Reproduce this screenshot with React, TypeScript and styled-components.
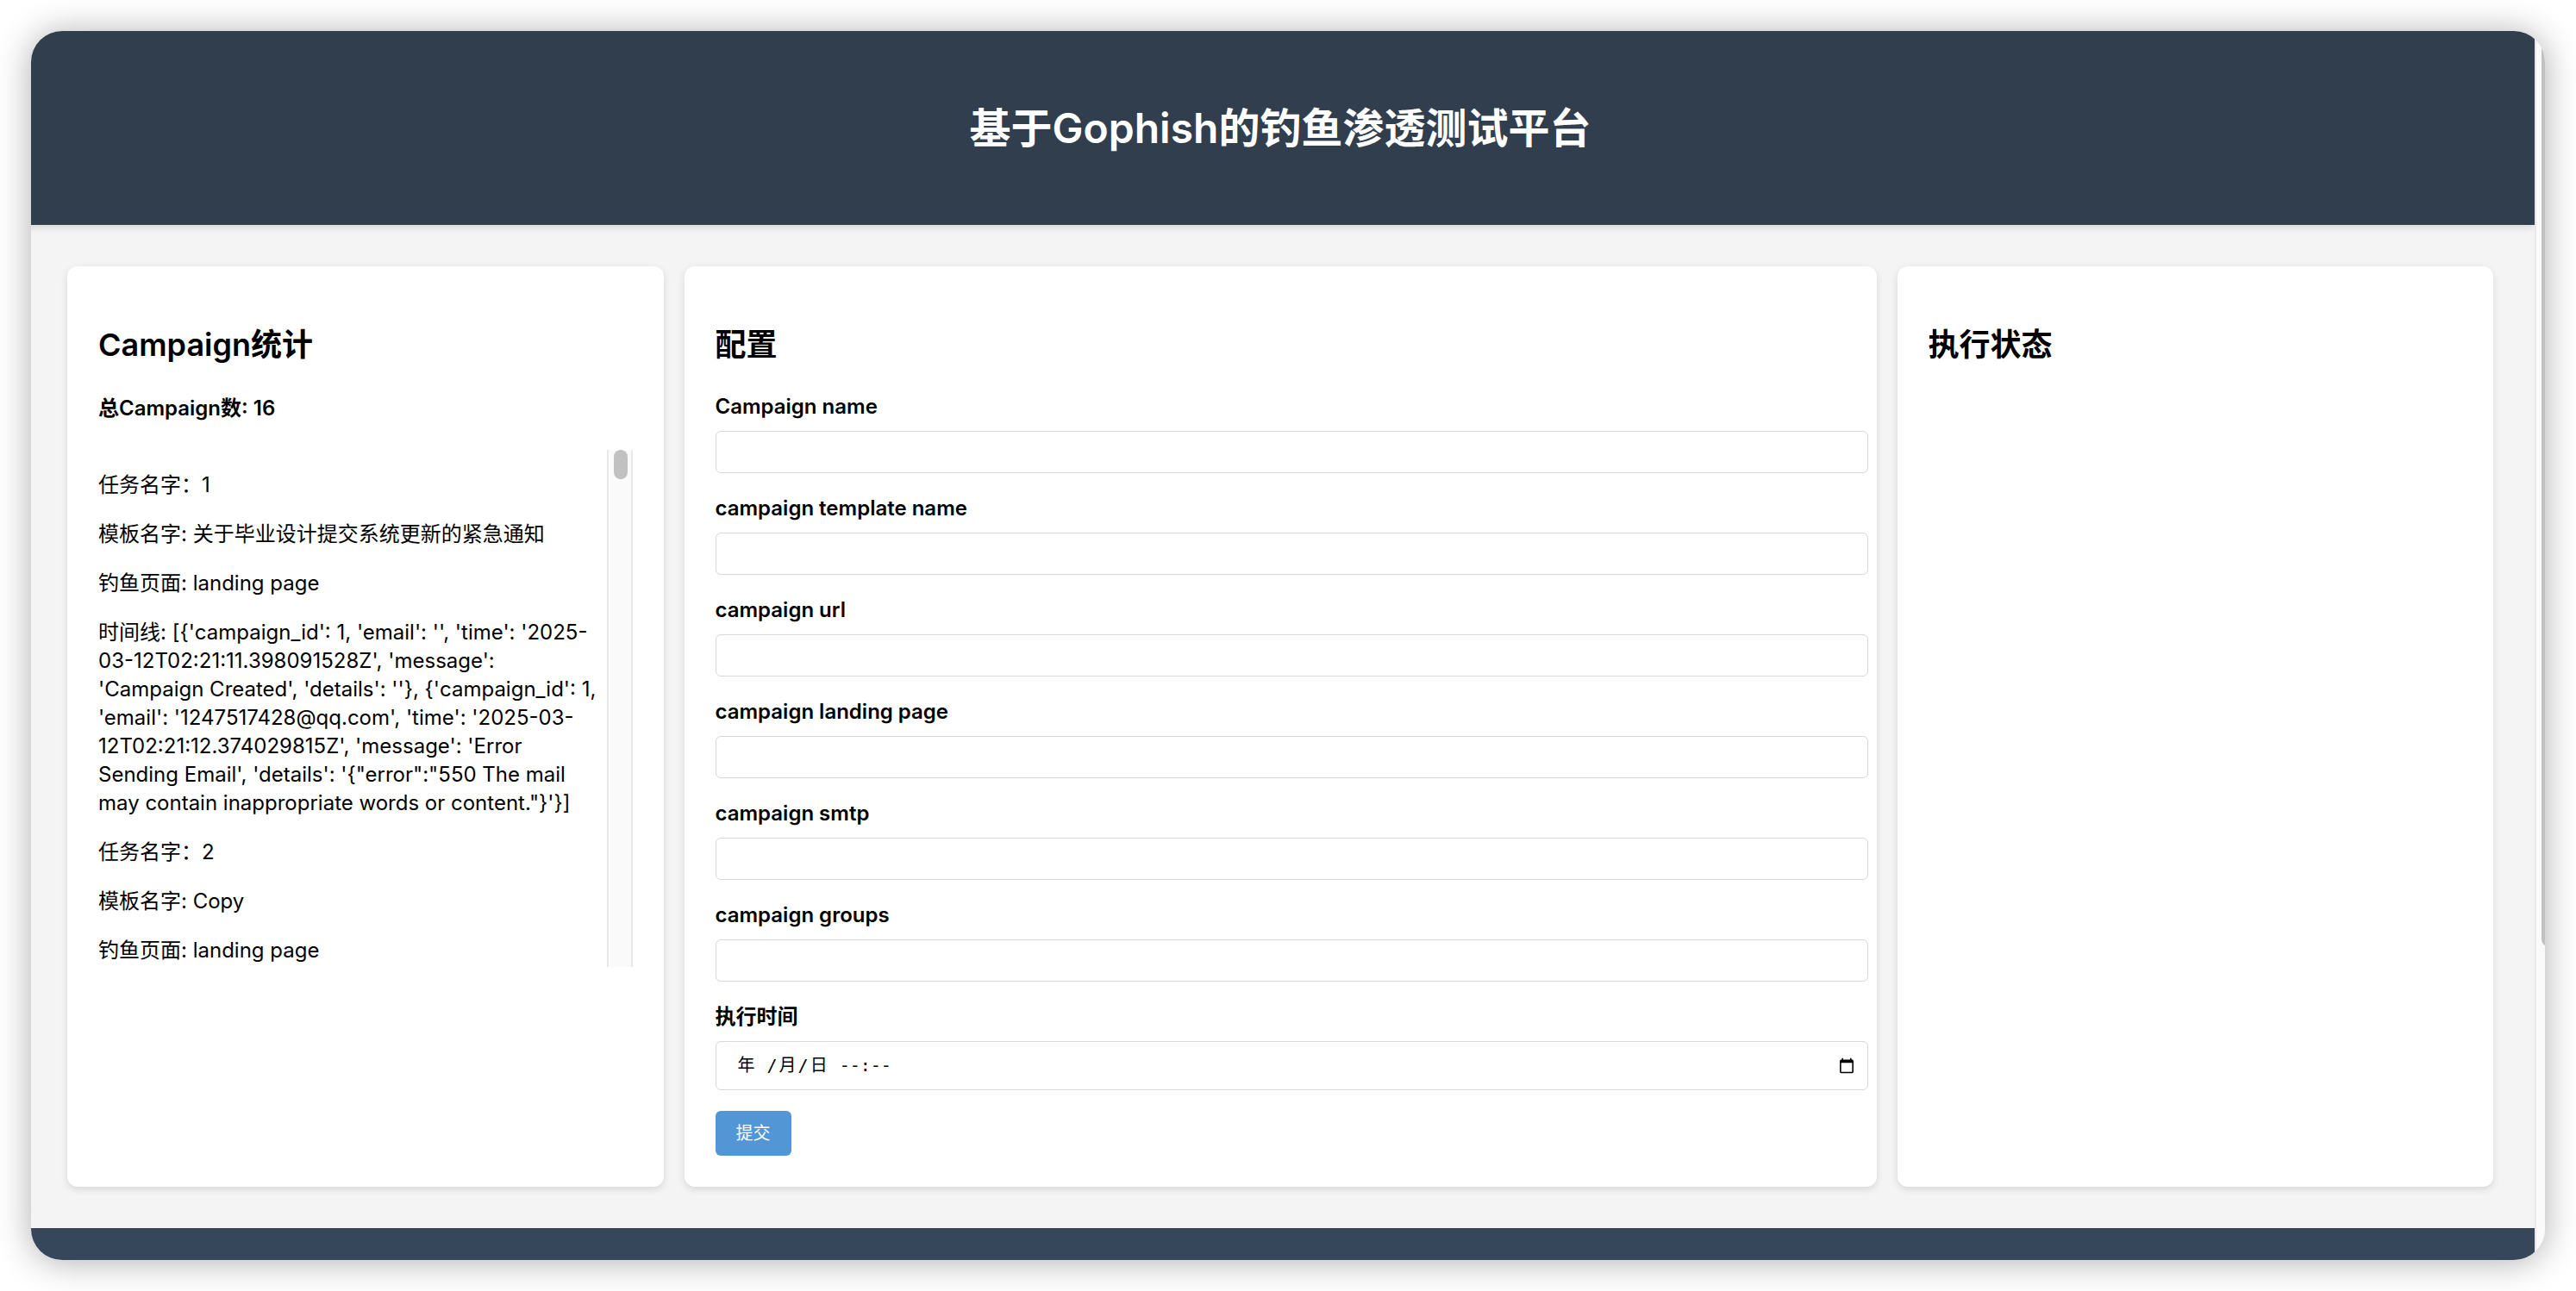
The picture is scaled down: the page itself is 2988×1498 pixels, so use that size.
import React, { useState } from "react";
import styled, { createGlobalStyle } from "styled-components";

const GlobalStyle = createGlobalStyle`
  *, *::before, *::after {
    box-sizing: border-box;
  }

  body {
    margin: 0;
    background: #fff;
    color: #000;
    font-family: Inter, "Noto Sans CJK SC", sans-serif;
    font-size: 24px;
    line-height: 33px;
  }
`;

const Desktop = styled.div`
  display: flex;
  min-height: 100vh;
  padding: 36px;
`;

const Window = styled.div`
  flex: 1;
  min-width: 0;
  display: flex;
  overflow: hidden;
  border-radius: 36px;
  background: #f4f4f4;
  box-shadow: 0 2px 40px rgba(0, 0, 0, 0.32);
`;

const Page = styled.div`
  flex: 1;
  min-width: 0;
  margin-left: -6px;
  display: flex;
  flex-direction: column;
`;

const PageRail = styled.div`
  flex: none;
  width: 12px;
  overflow: hidden;
  padding-left: 6px;
  border-left: 2px solid #e8e8e8;
  background: #fafafa;
`;

const PageThumb = styled.div`
  width: 16px;
  height: 74.5%;
  border-radius: 8px;
  background: #c1c1c1;
`;

const Header = styled.header`
  padding: 36px;
  background: #313e4e;
  color: #fff;
  text-align: center;
  box-shadow: 0 3px 8px rgba(0, 0, 0, 0.12);
`;

const Title = styled.h1`
  margin: 42px 0;
  font-size: 48px;
  font-weight: 600;
  line-height: 69px;
`;

const Columns = styled.main`
  display: grid;
  grid-template-columns: minmax(0, 1fr) minmax(0, 2fr) minmax(0, 1fr);
  gap: 24px;
  padding: 48px;
`;

const Card = styled.section`
  padding: 36px;
  border-radius: 12px;
  background: #fff;
  box-shadow: 0 3px 8px rgba(0, 0, 0, 0.12);
`;

const CardTitle = styled.h2`
  margin: 30px 0;
  font-size: 36px;
  font-weight: 600;
  line-height: 50px;
`;

const Total = styled.p`
  margin: 0 0 30px;
  font-weight: 600;
  line-height: 37px;
`;

const ScrollBox = styled.div`
  display: flex;
  height: 600px;
`;

const ScrollContent = styled.div`
  flex: 1;
  min-width: 0;
  padding-right: 10px;
  overflow: hidden;
`;

const ScrollRail = styled.div`
  flex: none;
  width: 30px;
  padding: 0 4px 0 6px;
  border: solid #e8e8e8;
  border-width: 0 2px;
  background: #fafafa;
`;

const ScrollThumb = styled.div`
  width: 16px;
  height: 34px;
  border-radius: 8px;
  background: #c1c1c1;
`;

const Entry = styled.p`
  margin: 24px 0;
  overflow-wrap: break-word;
`;

const Form = styled.form`
  display: flex;
  flex-direction: column;
  align-items: flex-start;
  gap: 24px;
`;

const Field = styled.div`
  width: 100%;
`;

const Label = styled.label`
  display: block;
  margin-bottom: 12px;
  font-weight: 600;
`;

const TextBox = styled.input`
  display: block;
  box-sizing: content-box;
  width: 100%;
  height: 23px;
  padding: 12px;
  border: 1px solid #d8d8d8;
  border-radius: 6px;
  background: #fff;
  font: inherit;
  font-size: 20px;
`;

const DateWrap = styled.div`
  position: relative;
`;

const DateBox = styled(TextBox)<{ $empty: boolean }>`
  height: 31px;
  font-family: "DejaVu Sans Mono", "Noto Sans CJK SC", monospace;

  &::-webkit-datetime-edit {
    opacity: ${({ $empty }) => ($empty ? 0 : 1)};
  }
`;

const DateHint = styled.div`
  position: absolute;
  inset: 0 auto 0 26px;
  display: flex;
  align-items: center;
  gap: 2px;
  pointer-events: none;
  white-space: pre;
  font-family: "DejaVu Sans Mono", "Noto Sans CJK SC", monospace;
  font-size: 20px;
`;

const Submit = styled.button`
  height: 52px;
  padding: 0 24px;
  border: 0;
  border-radius: 6px;
  background: #5296d5;
  color: #fff;
  font: inherit;
  font-size: 20px;
  cursor: pointer;
`;

const Footer = styled.footer`
  flex: 1;
  min-height: 37px;
  background: #37475b;
`;

const campaigns = [
  {
    name: "1",
    template: "关于毕业设计提交系统更新的紧急通知",
    page: "landing page",
    timeline:
      "[{'campaign_id': 1, 'email': '', 'time': '2025-03-12T02:21:11.398091528Z', 'message': 'Campaign Created', 'details': ''}, {'campaign_id': 1, 'email': '1247517428@qq.com', 'time': '2025-03-12T02:21:12.374029815Z', 'message': 'Error Sending Email', 'details': '{\"error\":\"550 The mail may contain inappropriate words or content.\"}'}]",
  },
  { name: "2", template: "Copy", page: "landing page" },
];

const fields = [
  { id: "name", label: "Campaign name" },
  { id: "template", label: "campaign template name" },
  { id: "url", label: "campaign url" },
  { id: "page", label: "campaign landing page" },
  { id: "smtp", label: "campaign smtp" },
  { id: "groups", label: "campaign groups" },
];

const dateParts = ["年 ", "/", "月", "/", "日 ", "--:--"];

export default function App() {
  const [launch, setLaunch] = useState("");

  return (
    <>
      <GlobalStyle />
      <Desktop>
        <Window>
          <Page>
            <Header>
              <Title>基于Gophish的钓鱼渗透测试平台</Title>
            </Header>
            <Columns>
              <Card>
                <CardTitle>Campaign统计</CardTitle>
                <Total>总Campaign数: 16</Total>
                <ScrollBox>
                  <ScrollContent>
                    {campaigns.map((c) => (
                      <React.Fragment key={c.name}>
                        <Entry>{`任务名字：${c.name}`}</Entry>
                        <Entry>{`模板名字: ${c.template}`}</Entry>
                        <Entry>{`钓鱼页面: ${c.page}`}</Entry>
                        {c.timeline && <Entry>{`时间线: ${c.timeline}`}</Entry>}
                      </React.Fragment>
                    ))}
                  </ScrollContent>
                  <ScrollRail>
                    <ScrollThumb />
                  </ScrollRail>
                </ScrollBox>
              </Card>
              <Card>
                <CardTitle>配置</CardTitle>
                <Form onSubmit={(e) => e.preventDefault()}>
                  {fields.map((f) => (
                    <Field key={f.id}>
                      <Label htmlFor={f.id}>{f.label}</Label>
                      <TextBox id={f.id} name={f.id} type="text" />
                    </Field>
                  ))}
                  <Field>
                    <Label htmlFor="launch">执行时间</Label>
                    <DateWrap>
                      <DateBox
                        id="launch"
                        name="launch"
                        type="datetime-local"
                        $empty={!launch}
                        value={launch}
                        onChange={(e) => setLaunch(e.target.value)}
                      />
                      {!launch && (
                        <DateHint aria-hidden="true">
                          {dateParts.map((part, i) => (
                            <span key={i}>{part}</span>
                          ))}
                        </DateHint>
                      )}
                    </DateWrap>
                  </Field>
                  <Submit type="submit">提交</Submit>
                </Form>
              </Card>
              <Card>
                <CardTitle>执行状态</CardTitle>
              </Card>
            </Columns>
            <Footer />
          </Page>
          <PageRail>
            <PageThumb />
          </PageRail>
        </Window>
      </Desktop>
    </>
  );
}
